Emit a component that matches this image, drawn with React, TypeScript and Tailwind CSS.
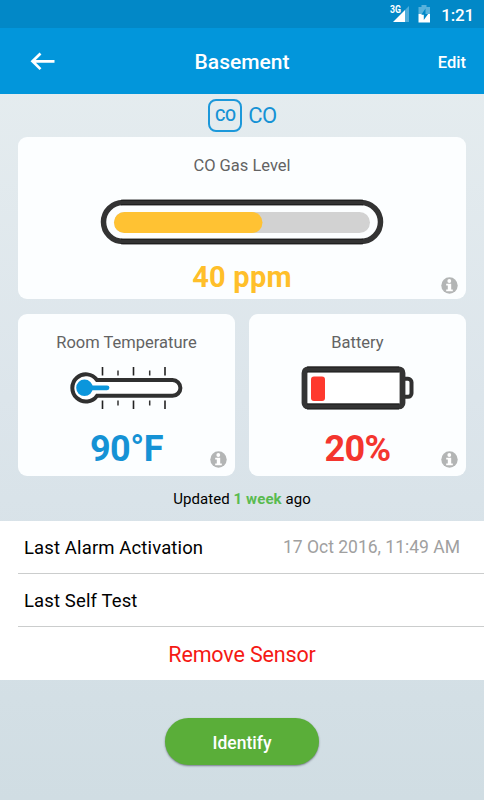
import React from 'react';

interface CardProps {
  title: string;
  value: string;
  valueClass: string;
  iconClass?: string;
  children: React.ReactNode;
}

const InfoIcon = ({ className }: { className: string }) => (
  <svg className={`absolute right-[8px] h-[17px] w-[17px] ${className}`} viewBox="0 0 17 17">
    <circle cx="8.5" cy="8.5" r="8.2" fill="#b3b5b5" />
    <circle cx="8.3" cy="4" r="1.9" fill="#fff" />
    <path d="M5.2 6.7h5v5.8h1.600v1.700H5.200v-1.700h1.600V8.400H5.200z" fill="#fff" />
  </svg>
);

const Card: React.FC<CardProps> = ({ title, value, valueClass, iconClass = 'bottom-[8px]', children }) => (
  <section className="relative flex h-[162px] flex-col items-center rounded-[9px] bg-[#fcfeff] pt-[19px]">
    <h2 className="h-[19px] text-[16.5px] leading-[20px] whitespace-nowrap text-[#636363]">{title}</h2>
    {children}
    <div className={`font-bold whitespace-nowrap ${valueClass}`}>{value}</div>
    <InfoIcon className={iconClass} />
  </section>
);

const StatusBar = () => (
  <div className="flex h-[28px] items-center justify-end bg-[#0288c7] pr-[10px] text-white">
    <svg className="h-[28px] w-[50px]" viewBox="-6 0 50 28">
      <path d="M14 10 18 6v16h-4z" fill="#4eaddb" />
      <path d="M14 10v12H2z" fill="#fff" />
      <text x="-1" y="13" fill="#fff" fontFamily="Roboto, sans-serif" fontSize="10" fontWeight="700" textLength="11" lengthAdjust="spacingAndGlyphs">3G</text>
      <path d="M30.500 5h5v2H39v7H27.500V7h3z" fill="#58b2dc" />
      <path d="M27.500 14H39v8.500H27.500z" fill="#fff" />
      <path d="M34.500 8.500l-4.200 6.300h2.500V20l4.300-6h-2.600z" fill="#0288c7" />
    </svg>
    <span className="ml-[6px] pt-[2px] text-[17px] leading-[28px] font-medium tracking-[-0.2px]">1:21</span>
  </div>
);

const Header = () => (
  <header className="grid h-[66px] grid-cols-[1fr_auto_1fr] items-center bg-[#0296db] text-white">
    <svg className="ml-[30px] h-[20px] w-[26px]" viewBox="0 0 26 20" fill="none" stroke="#fff" strokeWidth="2.7">
      <path d="M24.500 10.300H2.500M10.500 2.500 2.500 10.300l8 7.800" />
    </svg>
    <h1 className="pt-[4px] text-[21px] font-medium">Basement</h1>
    <button className="justify-self-end pt-[4px] pr-[18px] text-[16.5px] font-medium">Edit</button>
  </header>
);

const GasLevel = () => (
  <svg className="mt-[24px] h-[46px] w-[284px]" viewBox="0 0 284 46">
    <rect x="3.500" y="3.500" width="277" height="39" rx="19.500" fill="#fcfeff" stroke="#333" strokeWidth="5.500" />
    <path d="M21 1.200h242M21 5.800h242M21 40.200h242M21 44.800h242" stroke="#111" strokeWidth=".8" />
    <rect x="14" y="13" width="256" height="21" rx="10.500" fill="#d2d2d2" />
    <rect x="14" y="13" width="148.500" height="21" rx="10.500" fill="#ffc233" />
  </svg>
);

const Thermometer = () => (
  <svg className="mt-[13px] h-[46px] w-[114px]" viewBox="0 0 114 46">
    <path
      d="M27 15H102.500a7.900 7.900 0 0 1 0 15.800H27A13.600 13.600 0 1 1 27 15Z"
      fill="#fff"
      stroke="#303030"
      strokeWidth="4"
    />
    <path d="M14.500 22.800h22.500" stroke="#0b96dc" strokeWidth="4.800" strokeLinecap="round" />
    <circle cx="14.500" cy="22.800" r="8.300" fill="#0b96dc" />
    <path d="M32.500 2v8.500M63.500 2v8.500M95 2v8.500M32.500 35.500V44M63.500 35.500V44M95 35.500V44" stroke="#222" strokeWidth="1.600" />
    <path d="M48 5.500v5M79.700 5.500v5M48 35.500v5M79.700 35.500v5" stroke="#333" strokeWidth="1.500" />
  </svg>
);

const Battery = () => (
  <svg className="mt-[13px] h-[46px] w-[114px]" viewBox="0 0 114 46">
    <path d="M103.500 13.800h3.500a3.500 3.500 0 0 1 3.500 3.500v11a3.500 3.500 0 0 1-3.500 3.500h-3.500" fill="none" stroke="#303030" strokeWidth="4" />
    <rect x="3.500" y="4.400" width="98" height="37" rx="3.500" fill="#fff" stroke="#343434" strokeWidth="5.800" />
    <path d="M6 2h92M6 7h92M6 39h92M6 44h92" stroke="#111" strokeWidth=".8" />
    <rect x="10" y="11.500" width="14" height="24.500" rx="3" fill="#fe392e" />
  </svg>
);

export default function App() {
  return (
    <main className="h-[800px] w-[484px] overflow-hidden bg-linear-to-b from-[#e7eef0] via-[#dce5eb] to-[#d0dde3] font-['Roboto',sans-serif] text-black">
      <StatusBar />
      <Header />

      <div className="flex h-[43px] items-center justify-center gap-[6px] text-[#1592d5]">
        <div className="ml-px flex h-[33px] w-[34px] items-center justify-center rounded-[8px] border-2 border-[#1c98da] text-[16px] font-medium tracking-[-0.6px]">
          CO
        </div>
        <span className="text-[22px] tracking-[-0.4px]">CO</span>
      </div>

      <div className="flex flex-col gap-[15px] px-[18px]">
        <Card title="CO Gas Level" value="40 ppm" valueClass="mt-[15px] text-[29px] leading-[34px] tracking-[0.2px] text-[#ffbf2a]" iconClass="bottom-[5px]">
          <GasLevel />
        </Card>
        <div className="grid grid-cols-2 gap-[14px]">
          <Card title="Room Temperature" value="90°F" valueClass="mt-[17px] text-[36px] leading-[42px] tracking-[-0.5px] text-[#1592d5]">
            <Thermometer />
          </Card>
          <Card title="Battery" value="20%" valueClass="mt-[17px] text-[36px] leading-[42px] tracking-[-0.7px] text-[#f4352e]">
            <Battery />
          </Card>
        </div>
      </div>

      <p className="h-[45px] text-center text-[15px] leading-[47px] tracking-[0.08px]">
        Updated <b className="text-[#59bb50]">1 week</b> ago
      </p>

      <div className="h-[159px] bg-white">
        <div className="ml-[18px] flex h-[53px] items-center justify-between border-b border-[#cbcdcd] pr-[24px] pl-[6px]">
          <span className="pt-[3px] text-[18.5px] tracking-[0.13px]">Last Alarm Activation</span>
          <span className="pt-px text-[17.5px] text-[#a0a0a0]">17 Oct 2016, 11:49 AM</span>
        </div>
        <div className="ml-[18px] flex h-[53px] items-center border-b border-[#cbcdcd] pl-[6px]">
          <span className="pt-[3px] text-[18.5px] tracking-[0.13px]">Last Self Test</span>
        </div>
        <button className="block h-[53px] w-full pt-[3px] text-[21.5px] tracking-[-0.15px] text-[#f51914]">Remove Sensor</button>
      </div>

      <button className="mx-auto mt-[38px] block h-[47px] w-[154px] rounded-full bg-[#5aae39] pt-[3px] text-[17.5px] font-medium text-white shadow-[0_1px_2px_rgba(60,60,80,0.6)]">
        Identify
      </button>
    </main>
  );
}
